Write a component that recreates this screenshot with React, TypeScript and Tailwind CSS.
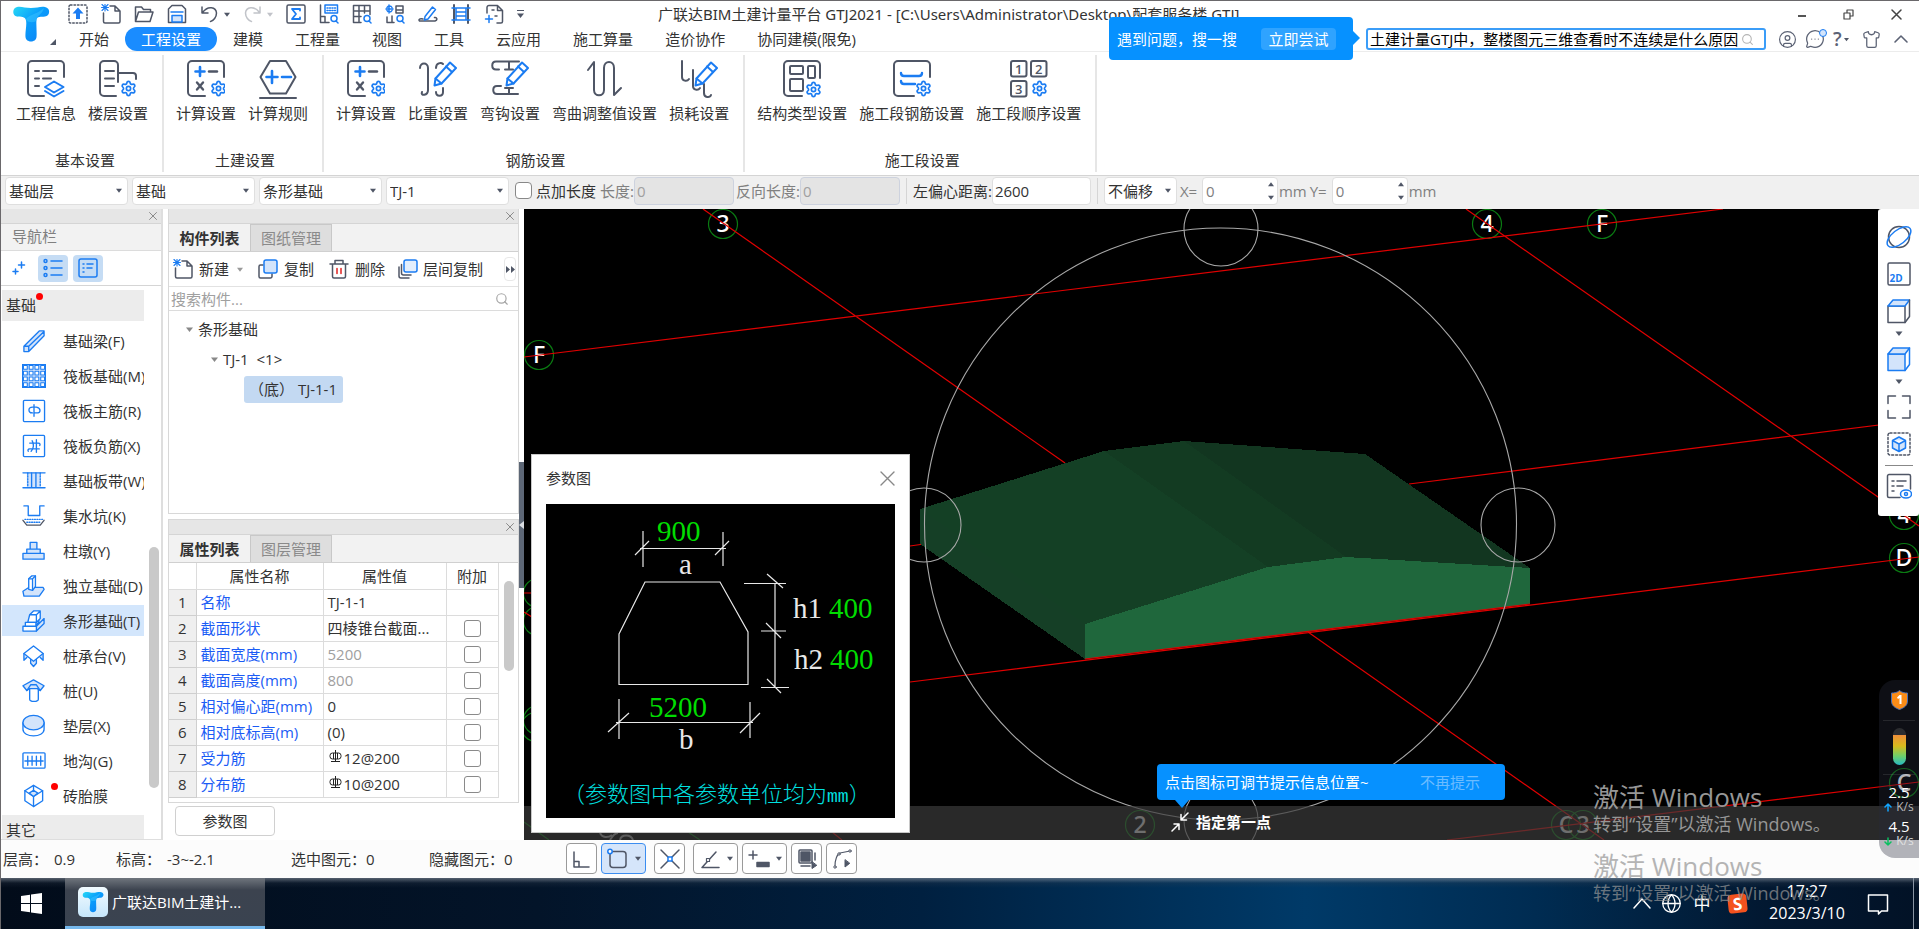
import React from "react";
import { Settings, Search, X, CircleUser, MessageCircleMore, Shirt, ChevronUp, Globe } from "lucide-react";

const D = "#4f5666";
const B = "#1b7cf2";
const L = "#d3e4fb";

type IconProps = { s?: number; vb?: string; h?: number; children: React.ReactNode };

function Svg({ s = 20, h, vb, children }: IconProps) {
  return (
    <svg
      width={s}
      height={h ?? s}
      viewBox={vb ?? `0 0 ${s} ${h ?? s}`}
      fill="none"
      stroke={D}
      strokeWidth={1.5}
      strokeLinecap="round"
      strokeLinejoin="round"
      className="block shrink-0"
      aria-hidden="true"
    >
      {children}
    </svg>
  );
}

function Tri({ c = D, w = 7 }: { c?: string; w?: number }) {
  return (
    <svg width={w} height={5} viewBox="0 0 7 5" className="block shrink-0" aria-hidden="true">
      <path d="M0 0.5h7L3.5 5z" fill={c} />
    </svg>
  );
}

function Gear({ x, y, s = 17 }: { x: number; y: number; s?: number }) {
  return <Settings x={x} y={y} size={s} color={B} strokeWidth={2.4} />;
}

function Pen() {
  return (
    <g stroke={B} strokeWidth="2">
      <path d="M31 2.500 37 8 22.500 23.500 15.500 25.500 16.500 18.500Z" fill="#fff" />
      <path d="M27 6.500 33 12M16.500 18.500 22.500 23.500" />
    </g>
  );
}

function LogoT({ id, s }: { id: string; s: number }) {
  return (
    <svg width={s} height={s} viewBox="0 0 38 38" className="block shrink-0" aria-hidden="true">
      <defs>
        <linearGradient id={id} x1="0" y1="0" x2="1" y2="1">
          <stop offset="0" stopColor="#27d8f5" />
          <stop offset="0.45" stopColor="#0a9dfb" />
          <stop offset="1" stopColor="#0c7df3" />
        </linearGradient>
      </defs>
      <path
        d="M5 2C9 1 13 3 19 3S29 1 33 2C39 3 38 11 33 11.500C29 12 25 11 24.500 15C24 20 25 27 24.500 32C24 38 14 38 13.500 32C13 27 15 20 14 15.500C13 11 9 12 5 11.500C0 11 0 3 5 2Z"
        fill={`url(#${id})`}
      />
      <path d="M14 15C15 10 24 10 32 3C30 10 25 10 24.500 15C24 18 16 18 14 15Z" fill="#3bc6ff" opacity=".5" />
    </svg>
  );
}

/* ---------- quick access bar ---------- */

const newFile = (
  <>
    <path d="M9 2h5l5 5v10.500a1.500 1.500 0 0 1-1.500 1.500H4a1.500 1.500 0 0 1-1.500-1.500V9M14 2v5h5" />
    <path d="M1 0.500l6 6M7 0.500l-6 6M4 0v7M0.500 3.500h7" stroke={B} strokeWidth="1.100" />
  </>
);

const lens = (
  <>
    <circle cx="15" cy="14.500" r="3" stroke={B} />
    <path d="M17 17l2 2" stroke={B} />
  </>
);

const quickA: [string, React.ReactNode][] = [
  ["上传", <><rect x="1" y="1" width="18" height="18" rx="1.5" strokeDasharray="1.500 2" /><path d="M10 3.500 15.500 9.500H12V15H8V9.500H4.500Z" fill={B} stroke="none" /></>],
  ["新建", newFile],
  ["打开", <path d="M1.500 17.500V3h6l2 2.500h7V8M1.500 17.500 4.500 8H19l-3 9.500Z" />],
  ["保存", <><path d="M1.500 18.500V5l3.500-3.500h10L18.500 5v13.500Z" /><path d="M5 18V11.500h10V18Z" fill={L} stroke={B} /><path d="M4 8h12" stroke={B} /></>],
];
const quickB: [string, React.ReactNode][] = [
  ["汇总", <><rect x="1" y="1" width="18" height="18" rx="1.500" /><path d="M14 6.500V5H6l4 5-4 5h8v-1.500" stroke={B} strokeWidth="1.800" /></>],
  ["查看", <><path d="M1.500 1v17.500H10M1.500 12.500h4.500v6" /><rect x="6" y="1" width="12.500" height="8" stroke={B} /><path d="M8 4h9M8 6.500h9" stroke={B} strokeDasharray="1 1.500" />{lens}</>],
  ["查表", <><path d="M1.500 1.500h16.500v9M1.500 1.500v17H9M7 1.500v17M12.500 1.500V9M1.500 7h16.500M1.500 12.500H9" />{lens}</>],
  ["查筋", <><path d="M11 2h7v7h-7zM2 13v5.500h7M7 12v6.500M11 6h7" /><path d="M4 1v8M1 5h7M2 3.500c1-2 4-2 5 0M2 6.500c1 2 4 2 5 0" stroke={B} />{lens}</>],
  ["编辑", <><path d="M5 15c-3-1-5 .5-3.500 2H17c3-1 2-4-.5-3.500" /><path d="M7 12.500 14.500 3l3 2.500L10 15l-3.500 1Z" stroke={B} /></>],
  ["钢筋", <><path d="M3 1v18M17 1v18" strokeWidth="2" /><path d="M1 4h18M5 8h10M5 12h10M1 16h18M5 4v12M15 4v12" stroke={B} /></>],
  ["图幅", <><path d="M3 9V3.500A2 2 0 0 1 5 1.500h8.500l5 5v11a1.500 1.500 0 0 1-1.500 1.500H13M13.500 1.500v5h5M8 6h2M13 12h-2" /><path d="M5 11.500v7M1.500 15H8.500" stroke={B} /></>],
];

/* ---------- ribbon ---------- */

const calcIcon = (
  <>
    <path d="M18 36H5a4 4 0 0 1-4-4V5a4 4 0 0 1 4-4h28a4 4 0 0 1 4 4v12" />
    <path d="M13 7v9M8.500 11.500h9" stroke={B} strokeWidth="2.600" />
    <path d="M22 11.500h8" strokeWidth="2.400" />
    <path d="M10 22.500l6 7M16 22.500l-6 7" strokeWidth="2.400" />
    <Gear x={23} y={20} />
  </>
);

const ribbon: { title: string; items: [string, React.ReactNode][] }[] = [
  {
    title: "基本设置",
    items: [
      ["工程信息", <><path d="M17 36H5a4 4 0 0 1-4-4V5a4 4 0 0 1 4-4h28a4 4 0 0 1 4 4v12" /><path d="M8 11h4M16 11h13M8 18.500h4M16 18.500h8M8 26h4" /><path d="M27 21.500 36.500 27 27 32.500 18 27ZM18 31l9 5.500 9.500-5.500" stroke={B} /></>],
      ["楼层设置", <><path d="M17 36H5a4 4 0 0 1-4-4V5a4 4 0 0 1 4-4h10a4 4 0 0 1 4 4v17M19 13h15a3 3 0 0 1 3 3v3M6 11h9M6 18.500h9M6 26h9" /><Gear x={21} y={20} /></>],
    ],
  },
  {
    title: "土建设置",
    items: [
      ["计算设置", calcIcon],
      ["计算规则", <><path d="M11 1h16l9.500 16L27 33.500H11L1.500 17ZM1 38h36" /><path d="M13 11v12M7.500 17h11M23 17h9" stroke={B} strokeWidth="2.600" /></>],
    ],
  },
  {
    title: "钢筋设置",
    items: [
      ["计算设置", calcIcon],
      ["比重设置", <><path d="M1 8c0-6 8-6 8 0v22c0 6-8 6-6 2M24 4c-2-2-7-1-7 4M24 28v4c0 5-7 5-7 0" /><Pen /></>],
      ["弯钩设置", <><path d="M28 1.500H5c-5 0-5 8 0 8h3M18 1.500v8M14 9.500h8M27 34H6c-5 0-5-8 0-8h4M18 34v-6M14 28h8" /><Pen /></>],
      ["弯曲调整值设置", <path d="M2 10 8 2v28c0 7 10 7 10 0V8c0-8 10-8 10 0v27l7-7" />],
      ["损耗设置", <><path d="M2 1v16c0 4 5 5 7 2M13 10v16c0 4 5 5 7 2M24 24v9c0 5 6 5 7 2" /><Pen /></>],
    ],
  },
  {
    title: "施工段设置",
    items: [
      ["结构类型设置", <><path d="M19 36H5a4 4 0 0 1-4-4V5a4 4 0 0 1 4-4h28a4 4 0 0 1 4 4v13" /><rect x="7" y="6" width="13" height="8" rx="1" /><rect x="7" y="19" width="13" height="12" rx="1" /><rect x="25" y="6" width="7" height="12" rx="1" /><Gear x={22} y={21} /></>],
      ["施工段钢筋设置", <><path d="M21 36H5a4 4 0 0 1-4-4V5a4 4 0 0 1 4-4h28a4 4 0 0 1 4 4v12" /><path d="M8 13c0 2 1 3 3 3h15c2 0 3-1 3-3M8 21c0 2 1 3 3 3h11" stroke={B} strokeWidth="2.400" /><Gear x={22} y={20} /></>],
      ["施工段顺序设置", <><rect x="1" y="1" width="15.500" height="15.500" rx="2" /><rect x="21" y="1" width="15.500" height="15.500" rx="2" /><rect x="1" y="21" width="15.500" height="15.500" rx="2" /><g fill={D} stroke="none" fontSize="13" fontWeight="600" textAnchor="middle" fontFamily="Open Sans, sans-serif"><text x="8.800" y="13.500">1</text><text x="28.800" y="13.500">2</text><text x="8.800" y="33.500">3</text></g><Gear x={21} y={20} /></>],
    ],
  },
];

/* ---------- navigation ---------- */

const raftHoles = [0, 6, 12, 18].flatMap((y) => [0, 6, 12, 18].map((x) => [x, y]));

const navItems: { label: string; icon: React.ReactNode; dot?: boolean; active?: boolean }[] = [
  { label: "基础梁(F)", icon: <path d="M2 18 18 2h5v5L7 23.500H2ZM2 18h5v5.500M7 18 23 2.500" fill={L} /> },
  { label: "筏板基础(M)", icon: <><path d="M0.500 0.500h24v24h-24Z" fill={L} />{raftHoles.map(([x, y]) => <rect key={`${x}-${y}`} x={x + 1.5} y={y + 1.5} width="4" height="4" fill="#fff" strokeWidth="1.100" />)}</> },
  { label: "筏板主筋(R)", icon: <><rect x="1.500" y="1.500" width="22" height="22" rx="1" /><path d="M12.500 6v12M15 8.500H11c-5 0-5 6 0 6h-2M15 8.500c5 1 5 6 0 6h-2" /></> },
  { label: "筏板负筋(X)", icon: <><rect x="1.500" y="1.500" width="22" height="22" rx="1" /><path d="M8 9.500h9c2 0 2 1.500 1.500 2.500M18 15.500H8c-2 0-2 1.500-1.500 2.500M10.500 7c2 3 2 8-1 11M15 6v13" /></> },
  { label: "基础板带(W)", icon: <><path d="M5 4h14v15H5Z" fill={L} stroke="none" /><path d="M1 4h23M1 19.500h23" /><path d="M6 4v15M19 4v15" strokeDasharray="1.500 1.500" /><path d="M10 4v15M14.500 4v15" /></> },
  { label: "集水坑(K)", icon: <><path d="M2 2h4.500v10h12V2H23" /><path d="M1 17l4 5h14l4-5" stroke={D} /><path d="M3 16h19M5 19h14" strokeDasharray="1 1.500" /></> },
  { label: "柱墩(Y)", icon: <path d="M1 15h22v6H1ZM5 15v-4.500h14V15M8.500 10.500V3.500h7v7" fill={L} /> },
  { label: "独立基础(D)", icon: <><path d="M1 18 7 14h15l1 2-5 7H2Z" fill={L} /><path d="M7 16V5l3-3h4v11l-3 4Z" fill="#fff" /><path d="M7 5h4l3-3M11 5v12" /></> },
  { label: "条形基础(T)", icon: <><path d="M15 18l8-8v5l-8 8ZM12.500 14l5-5v5l-5 4Z" fill={L} /><path d="M6 14 8 6l4-4h7v8l-4 4ZM15 14V6l4-4M8 6h7" fill="#fff" /><path d="M1 18h14v5H1ZM3.500 14h11v4h-11Z" fill="#fff" /></>, active: true },
  { label: "桩承台(V)", icon: <><path d="M2 10v7l3-3M22 10v7l-3-3M9 16v4l3 3.500 3-3.500v-4" fill={L} /><path d="M2 10 12 2l10 8-10 8Z" fill="#fff" /></> },
  { label: "桩(U)", icon: <><path d="M8 10v11c0 3 9 3 9 0V10" /><path d="M1 7 12 1l11 6-4 5-3-2H8l-3 2Z" fill={L} /><path d="M5 12 9 6h6l4 6" /></> },
  { label: "垫层(X)", icon: <><path d="M1 9v7c0 9 22 9 22 0V9" /><ellipse cx="12" cy="9" rx="11" ry="7.500" fill={L} /></> },
  { label: "地沟(G)", icon: <><rect x="1" y="4" width="23" height="16" rx="1" /><path d="M3 12.500h19M6 7.500v9.500M10.500 7.500v9.500M15 7.500v9.500M19.500 7.500v9.500" /></> },
  { label: "砖胎膜", icon: <><path d="M3 7 12 1.500 21.500 7v10.500L12 23.500 3 17.500Z" fill="#fff" /><path d="M3 7l9 6 9.500-6M12 13v10.500M12 1.500v5" /><path d="M7.500 9.500l4.500-3 4.500 3-4.500 3.500Z" fill={L} /></>, dot: true },
];

/* ---------- properties ---------- */

type Row = { name: string; value: string; muted?: boolean; check?: boolean; rebar?: boolean };
const rows: Row[] = [
  { name: "名称", value: "TJ-1-1" },
  { name: "截面形状", value: "四棱锥台截面...", check: true },
  { name: "截面宽度(mm)", value: "5200", muted: true, check: true },
  { name: "截面高度(mm)", value: "800", muted: true, check: true },
  { name: "相对偏心距(mm)", value: "0", check: true },
  { name: "相对底标高(m)", value: "(0)", check: true },
  { name: "受力筋", value: "12@200", check: true, rebar: true },
  { name: "分布筋", value: "10@200", check: true, rebar: true },
];

function Rebar() {
  return (
    <svg width="13" height="13" viewBox="0 0 13 13" fill="none" stroke="#222" strokeWidth="1" className="mb-1 ml-px block shrink-0" aria-hidden="true">
      <path d="M6.500 0v12M2 11.500h9M4.500 3v6M8.500 3v6" />
      <rect x="1" y="3" width="11" height="6" rx="2.500" />
    </svg>
  );
}

/* ---------- shared pieces ---------- */

function Combo({ label, value, className }: { label: string; value: string; className: string }) {
  return (
    <div className={`relative ${className}`}>
      <select
        aria-label={label}
        className="h-7 w-full appearance-none rounded border border-[#dfdfdf] bg-white pl-[3px] pr-4 text-[15px] leading-6 text-[#333] outline-none"
      >
        <option>{value}</option>
      </select>
      <span className="pointer-events-none absolute right-[6px] top-[11px]">
        <Tri w={6} />
      </span>
    </div>
  );
}

function Spin({ label, unit }: { label: string; unit: string }) {
  return (
    <label className="ml-[3px] flex items-center text-[#808080]">
      <span className="w-[22px]">{label}</span>
      <span className="relative w-[76px]">
        <input defaultValue="0" className="h-7 w-full rounded border border-[#dfdfdf] bg-white pl-[3px] text-[15px] text-[#808080] outline-none" />
        <span className="pointer-events-none absolute right-1 top-[5px] flex flex-col gap-2">
          <span className="rotate-180"><Tri w={6} /></span>
          <Tri w={6} />
        </span>
      </span>
      <span className="ml-px">{unit}</span>
    </label>
  );
}

function PanelStrip() {
  return (
    <div className="flex h-[15px] shrink-0 items-center justify-end border-b border-[#d5d5d5] bg-[#e6e6e6] pr-px">
      <button aria-label="关闭面板"><X size={14} color="#8a8a8a" strokeWidth={1.7} className="block" /></button>
    </div>
  );
}

function Tabs({ a, b }: { a: string; b: string }) {
  return (
    <div className="flex h-[28px] shrink-0 border-b border-[#d0d0d0] bg-[#f2f2f2] text-center" role="tablist">
      <button role="tab" className="w-[81px] bg-[#f2f2f2] font-bold text-[#333]">{a}</button>
      <button role="tab" className="w-[82px] border border-b-0 border-[#c8c8c8] bg-[#dedede] text-[#8a8a8a]">{b}</button>
    </div>
  );
}

/* ---------- 3D scene ---------- */

const axes: [string, number, number, boolean][] = [
  ["3", 723, 224, false],
  ["F", 539, 355, false],
  ["4", 1487, 224, false],
  ["F", 1602, 224, false],
  ["4", 1904, 515, false],
  ["D", 1904, 558, false],
  ["C", 1904, 783, false],
  ["2", 1140, 825, true],
  ["C", 1566, 825, true],
  ["3", 1583, 825, true],
];

function Scene() {
  return (
    <svg viewBox="524 209 1395 631" preserveAspectRatio="xMinYMin slice" className="block h-full w-full" role="img" aria-label="三维模型">
      <g fill="none" stroke="#0a7a12" strokeWidth="1.200">
        {axes.map(([t, x, y]) => (
          <circle key={`${t}${x}`} cx={x} cy={y} r="14.500" />
        ))}
        <circle cx="538" cy="593" r="14.500" /><circle cx="538" cy="621" r="14.500" /><circle cx="536" cy="727" r="14.500" /><circle cx="538" cy="720" r="14.500" />
        <path d="M524 822l25 18M688 832l12 8" />
      </g>
      <g fontFamily="Noto Sans, sans-serif" fontSize="23" fontWeight="500" textAnchor="middle">
        {axes.map(([t, x, y, dim]) => (
          <text key={`${t}${x}`} x={x} y={y + 8} fill={dim ? "#e8e8e8" : "#fff"}>{t}</text>
        ))}
      </g>
      <g stroke="#e00000" strokeWidth="1.200">
        <path d="M703 209 1065 463M524 357 1723 209M1466 209 1878 497 1919 526M1409 484 1919 420M910 546 924 544M910 682 1919 557M1308 632 1604 840M1447 840 1919 782M524 593h8M524 612l8 5M832 832l10 8" fill="none" />
      </g>
      <g shapeRendering="crispEdges">
        <path d="M920 509 1085 624V659L920 544Z" fill="#153f26" />
        <path d="M920 509 1104 451 1268 567 1085 624Z" fill="#144025" />
        <path d="M1104 451 1184 441 1346 557 1268 567Z" fill="#133b22" />
        <path d="M1184 441 1365 454 1530 568 1346 557Z" fill="#123620" />
        <path d="M1085 624 1268 567 1346 557 1530 568V604L1085 659Z" fill="#1f673c" />
      </g>
      <path d="M1085 659 1530 604" stroke="#e00000" strokeWidth="1.200" />
      <g fill="none" stroke="#a8a8a8" strokeWidth="1.100">
        <circle cx="1220.500" cy="524" r="296" />
        <circle cx="1221" cy="229" r="37" />
        <circle cx="924" cy="525" r="37" />
        <circle cx="1518" cy="525" r="37" />
        <circle cx="1221" cy="820" r="37" />
        <path d="M600 833c2 5 8 5 12 2M610 840c3-5 6-7 8-7M620 840c1-6 11-6 13 0" strokeWidth="2" />
      </g>
      <rect x="524" y="806" width="1395" height="40" fill="#3b3b3b" opacity=".7" />
    </svg>
  );
}

function ParamDrawing() {
  return (
    <svg viewBox="546 504 349 314" className="block w-full bg-black" role="img" aria-label="四棱锥台截面参数图">
      <g fill="none" stroke="#e8e8e8" strokeWidth="1.200">
        <path d="M619 634 645 582H720L748 632V684.500H619Z" />
        <path d="M643 531v36M723 532v34M640 548.500h86M635 555l14-14M715 555l14-14" />
        <path d="M619 699v40M750 702v36M616 722.500h137M608 732l21-19M740 733l20-20" />
        <path d="M744 583.500h42M775 583v104M761 631h25M761 687.500h28M767 574l16 14M766 623l15 15M767 679l14 14" />
      </g>
      <g fontFamily="Liberation Serif, serif" fontSize="29" fill="#00dd00">
        <text x="657" y="541">900</text>
        <text x="649" y="717">5200</text>
        <text x="829" y="618">400</text>
        <text x="830" y="669">400</text>
        <g fill="#e8e8e8">
          <text x="679" y="574">a</text>
          <text x="679" y="749">b</text>
          <text x="793" y="618">h1</text>
          <text x="794" y="669">h2</text>
        </g>
      </g>
      <text x="563" y="802" fontSize="22" fontWeight="300" fill="#00e0e0" fontFamily="Noto Sans CJK SC, sans-serif">
        （参数图中各参数单位均为<tspan fontFamily="Liberation Mono, monospace" fontSize="18">mm</tspan>）
      </text>
    </svg>
  );
}

const cube = (fill: string, stroke: string, top: string) => (
  <g stroke={stroke}>
    <path d="M1.500 7.500h17V24h-17Z" fill={fill} />
    <path d="M1.500 7.500 6.500 1.500H23l-4.500 6Z" fill={top} stroke={B} />
    <path d="M18.500 24 23 18V1.500" />
  </g>
);

const viewTools: [string, React.ReactNode][] = [
  ["动态观察", <><circle cx="12.500" cy="12.500" r="10.500" /><ellipse cx="12.500" cy="12.500" rx="14" ry="7" transform="rotate(-38 12.500 12.500)" stroke={B} /></>],
  ["二维", <><rect x="1.500" y="1.500" width="22" height="22" rx="1.500" /><text x="3" y="20.500" fontSize="10" fontWeight="700" fill={B} stroke="none" fontFamily="Open Sans, sans-serif">2D</text></>],
  ["俯视", cube("#fff", D, L)],
  ["实体", cube(L, B, L)],
  ["全屏", <path d="M1.500 9V1.500H9M16 1.500h7.500V9M23.500 16v7.500H16M9 23.500H1.500V16" />],
  ["局部三维", <><rect x="1.500" y="1.500" width="22" height="22" rx="2" strokeDasharray="2 2" /><path d="M12.500 5.500 19 9v7.500l-6.500 3.500L6 16.500V9ZM6 9l6.500 3.500L19 9M12.500 12.500V20" stroke={B} fill={L} /></>],
];

const snapTools: { label: string; icon: React.ReactNode; wide?: boolean; active?: boolean; gap: string }[] = [
  { label: "正交", gap: "ml-0", icon: <path d="M3 4v15h15M3 13.500h5V19" /> },
  { label: "对象捕捉", gap: "ml-1", wide: true, active: true, icon: <><rect x="3" y="3.500" width="16" height="16" rx="3" /><circle cx="3" cy="3.500" r="2.200" stroke={B} fill="#fff" /></> },
  { label: "交点", gap: "ml-2", icon: <><path d="M2 2l18 18M20 2 2 20" /><rect x="9" y="9" width="4" height="4" stroke={B} fill="#fff" /></> },
  { label: "角度", gap: "ml-2", wide: true, icon: <><path d="M17 4 3 19.500h17" /><rect x="7.500" y="10.500" width="3" height="3" fill="#fff" strokeWidth="1.200" /></> },
  { label: "动态输入", gap: "ml-1", wide: true, icon: <><path d="M1 7h8M5 3v8" /><rect x="9" y="14.500" width="12" height="4" fill={D} /></> },
  { label: "选择", gap: "ml-1", icon: <><rect x="3" y="2" width="13" height="13" rx="1" /><rect x="5" y="4" width="9" height="9" fill={D} /><path d="M19 5v7M5 18h9" /><path d="M16 14v6.500l4.500-3Z" fill={D} strokeWidth="1" /></> },
  { label: "折线", gap: "ml-1", icon: <><path d="M4 18c0-6 2-12 5-13l10-2" strokeWidth="1.200" /><path d="M14 12v7l4.500-3.500Z" fill={D} strokeWidth="1" /><g fill="#fff" strokeWidth="1"><circle cx="4" cy="19" r="1.200" /><circle cx="8" cy="6" r="1.200" /><circle cx="19" cy="3" r="1.200" /></g></> },
];

function Watermark() {
  return (
    <div className="w-[236px] whitespace-nowrap text-[#969696]">
      <p className="text-[26px] leading-[30px]">激活 Windows</p>
      <p className="text-[18px] leading-[24px]">转到“设置”以激活 Windows。</p>
    </div>
  );
}

export default function App() {
  return (
    <div
      className="relative flex h-screen flex-col overflow-hidden border-l border-t border-[#6a686b] bg-white text-[15px] leading-5 text-[#333]"
      style={{ fontFamily: '"Open Sans", "Noto Sans CJK SC", sans-serif' }}
    >
      {/* title bar and tabs */}
      <header className="flex h-[51px] shrink-0 border-b border-[#ececec]">
        <div className="flex w-[62px] items-start pl-[11px] pt-[4px]">
          <LogoT id="lg1" s={38} />
          <svg width="6" height="6" viewBox="0 0 6 6" className="mt-[34px] shrink-0" aria-hidden="true"><path d="M6 0v6H0z" fill={D} /></svg>
        </div>
        <div className="flex min-w-0 flex-1 flex-col">
          <div className="flex h-[26px] items-center">
            <div className="flex items-center gap-[13px] pl-[5px]">
              {quickA.map(([l, i]) => <button key={l} aria-label={l}><Svg>{i}</Svg></button>)}
              <button aria-label="撤销" className="flex items-center gap-1"><Svg><path d="M2 3v6h6M2.500 8.500C8 1 16 3 16.500 9c0 4-3 8-6 8.500" /></Svg><Tri w={6} /></button>
              <button aria-label="恢复" className="flex items-center gap-1 opacity-35"><Svg><path d="M17 3v6h-6M16.500 8.500C11 1 3 3 2.500 9c0 4 3 8 6 8.500" /></Svg><Tri w={6} /></button>
              {quickB.map(([l, i]) => <button key={l} aria-label={l}><Svg>{i}</Svg></button>)}
              <button aria-label="更多" className="flex flex-col gap-[2px]"><span className="h-px w-[7px] bg-[#4f5666]" /><Tri /></button>
            </div>
            <h1 className="ml-[134px] whitespace-nowrap" style={{ fontFamily: '"Noto Sans", "Noto Sans CJK SC", sans-serif' }}>
              广联达BIM土建计量平台 GTJ2021 - [C:\Users\Administrator\Desktop\配套服务楼.GTJ]
            </h1>
            <div className="ml-auto flex items-center gap-[37px] pr-[17px]">
              <button aria-label="最小化" className="mt-1 h-[2px] w-[8px] bg-[#555]" />
              <button aria-label="还原"><Svg s={11}><path d="M1 4h6v6H1ZM4 4V1h6v6H7" strokeWidth="1.200" stroke="#444" /></Svg></button>
              <button aria-label="关闭"><Svg s={11}><path d="M1 1l9 9M10 1l-9 9" strokeWidth="1.500" stroke="#444" /></Svg></button>
            </div>
          </div>
          <nav className="flex h-6 items-center">
            {["开始", "工程设置", "建模", "工程量", "视图", "工具", "云应用", "施工算量", "造价协作", "协同建模(限免)"].map((t) => (
              <button
                key={t}
                className={t === "工程设置" ? "h-6 rounded-full bg-[#1a8cff] px-4 text-white" : "h-6 px-4"}
              >
                {t}
              </button>
            ))}
            <div className="relative ml-auto">
              <div className="absolute -top-[11px] right-full z-10 mr-[13px] flex h-[43px] w-[244px] items-center rounded bg-[#0691ff] pl-2 text-white">
                <span className="whitespace-nowrap">遇到问题，搜一搜</span>
                <button className="ml-auto mr-[17px] h-[22px] w-[75px] rounded-sm bg-[#2fa3ff]">立即尝试</button>
                <svg width="7" height="14" viewBox="0 0 7 14" className="absolute left-full top-[14px]" aria-hidden="true"><path d="M0 0 7 7 0 14Z" fill="#0691ff" /></svg>
              </div>
              <div className="flex h-[22px] w-[400px] items-center rounded-[3px] border-2 border-[#3b9df8] bg-white px-[2px]">
                <input aria-label="搜索" defaultValue="土建计量GTJ中，整楼图元三维查看时不连续是什么原因" className="min-w-0 flex-1 bg-transparent text-[15px] leading-[18px] text-black outline-none" />
                <Search size={13} color="#b5b5b5" className="ml-[2px] mr-2 shrink-0" />
              </div>
            </div>
            <div className="ml-3 flex items-center gap-2 pr-[6px] text-[#5c6375]">
              <button aria-label="用户"><CircleUser size={19} strokeWidth={1.500} /></button>
              <button aria-label="消息" className="relative">
                <MessageCircleMore size={20} strokeWidth={1.500} />
                <span className="absolute -right-[2px] top-0 size-[8px] rounded-full border border-[#1b7cf2] bg-[#d3e4fb]" />
              </button>
              <button aria-label="帮助" className="flex w-[21px] items-center text-[19px] font-semibold"><span>?</span><span className="ml-[2px]"><Tri w={5} /></span></button>
              <button aria-label="皮肤"><Shirt size={19} strokeWidth={1.600} /></button>
              <button aria-label="收起"><ChevronUp size={24} strokeWidth={1.600} /></button>
            </div>
          </nav>
        </div>
      </header>

      {/* ribbon */}
      <section className="flex h-[124px] shrink-0 border-b border-[#d4d4d4] pl-[3px]">
        {ribbon.map((g) => (
          <div key={g.title} className="my-[3px] flex flex-col items-center border-r-2 border-[#e6e6e6] pb-[2px] pl-[6px] pr-2 pt-[5px]">
            <div className="flex">
              {g.items.map(([l, i]) => (
                <button key={l} className="flex flex-col items-center gap-1 whitespace-nowrap px-[6px]">
                  <Svg s={38} h={39}><g strokeWidth="2">{i}</g></Svg>
                  {l}
                </button>
              ))}
            </div>
            <h2 className="mt-auto pl-[6px]">{g.title}</h2>
          </div>
        ))}
      </section>

      {/* option bar */}
      <section className="flex h-[33px] shrink-0 items-center whitespace-nowrap bg-[#f0f0f0] pb-[5px] pl-1 pt-px">
        <div className="flex gap-1">
          <Combo label="楼层" value="基础层" className="w-[123px]" />
          <Combo label="类别" value="基础" className="w-[123px]" />
          <Combo label="构件类型" value="条形基础" className="w-[123px]" />
          <Combo label="构件" value="TJ-1" className="w-[123px]" />
        </div>
        <label className="ml-[6px] flex items-center gap-1">
          <input type="checkbox" className="size-[17px] appearance-none rounded-sm border border-[#888] bg-white" />
          点加长度
        </label>
        <label className="ml-1 flex items-center text-[#808080]">长度:
          <input disabled defaultValue="0" className="h-7 w-[100px] rounded border border-[#cdd2de] bg-[#e4e4e4] pl-[2px] text-[15px] text-[#a0a0a0]" />
        </label>
        <label className="ml-[2px] flex items-center text-[#808080]">反向长度:
          <input disabled defaultValue="0" className="h-7 w-[100px] rounded border border-[#cdd2de] bg-[#e4e4e4] pl-[2px] text-[15px] text-[#a0a0a0]" />
        </label>
        <span className="mx-[6px] h-[26px] w-px bg-[#d5d5d5]" />
        <label className="flex items-center">左偏心距离:
          <input defaultValue="2600" className="h-7 w-[99px] rounded border border-[#dfdfdf] bg-white pl-[2px] text-[15px]" />
        </label>
        <span className="mx-[6px] h-[26px] w-px bg-[#d5d5d5]" />
        <Combo label="偏移" value="不偏移" className="w-[73px]" />
        <Spin label="X=" unit="mm" />
        <Spin label="Y=" unit="mm" />
      </section>

      {/* work area */}
      <main className="flex min-h-0 flex-1">
        <aside className="flex w-[162px] shrink-0 flex-col border-b border-r-2 border-[#dedede]">
          <PanelStrip />
          <h2 className="h-[27px] shrink-0 border-b border-[#dcdcdc] bg-[#f2f2f2] pl-[11px] leading-[25px] text-[#808080]">导航栏</h2>
          <div className="flex h-[35px] shrink-0 items-center gap-[5px] border-b border-[#d5d5d5] pl-1">
            <button aria-label="添加" className="flex h-[27px] w-[28px] items-center justify-center"><Svg s={14}><g stroke={B}><path d="M9.500 1v6M6.500 4h6M3.500 8v5M1 10.500h5" /></g></Svg></button>
            <button aria-label="列表" className="flex h-[27px] w-[30px] items-center justify-center rounded bg-[#c5dcf4]"><Svg s={20}><g stroke={B}><path d="M8 3h11M8 10h11M8 17h11" /><circle cx="2.500" cy="3" r="1.500" /><circle cx="2.500" cy="10" r="1.500" /><circle cx="2.500" cy="17" r="1.500" /></g></Svg></button>
            <button aria-label="详情" className="flex h-[27px] w-[30px] items-center justify-center rounded bg-[#c5dcf4]"><Svg s={20}><g stroke={B}><rect x="1" y="1" width="18" height="18" rx="2" /><path d="M5 6h1M9 6h6M5 10h1M9 10h5M5 14h1" /></g></Svg></button>
          </div>
          <div className="flex min-h-0 flex-1 overflow-hidden">
            <div className="w-[143px] shrink-0 overflow-hidden pl-px pt-1">
              <h3 className="relative h-[31px] bg-[#ececec] pl-1 leading-[31px]">
                基础
                <span className="absolute left-[34px] top-[3px] size-[7px] rounded-full bg-[#f00]" />
              </h3>
              <ul className="pt-[2px]">
                {navItems.map((n) => (
                  <li key={n.label} className="h-[35px] py-[2px]">
                    <button className={n.active ? "relative flex h-[31px] w-full items-center gap-[17px] whitespace-nowrap bg-[#d3e6fc] pl-[20px]" : "relative flex h-[31px] w-full items-center gap-[17px] whitespace-nowrap pl-[20px]"}>
                      <Svg s={24} vb="0 0 25 25"><g stroke={B} strokeWidth="1.400">{n.icon}</g></Svg>
                      {n.label}
                      {n.dot && <span className="absolute left-[49px] top-[3px] size-[7px] rounded-full bg-[#f00]" />}
                    </button>
                  </li>
                ))}
              </ul>
              <h3 className="mt-[2px] h-[31px] bg-[#ececec] pl-1 leading-[31px]">其它</h3>
            </div>
            <div className="ml-[5px] mt-[261px] h-[241px] w-[10px] rounded-full bg-[#c9c9c9]" />
          </div>
        </aside>

        <div className="ml-[5px] flex w-[351px] shrink-0 flex-col">
          <section className="flex h-[305px] shrink-0 flex-col border border-t-0 border-[#d8d8d8]">
            <PanelStrip />
            <Tabs a="构件列表" b="图纸管理" />
            <div className="flex h-[35px] shrink-0 items-center border-b border-[#e2e2e2] pl-1">
              <button className="flex items-center gap-[6px]"><Svg>{newFile}</Svg>新建</button>
              <span className="ml-2"><Tri w={6} c="#999" /></span>
              <button className="ml-[15px] flex items-center gap-[6px]"><Svg><path d="M5 6H2.500A1.500 1.500 0 0 0 1 7.500v10A1.500 1.500 0 0 0 2.500 19h10a1.500 1.500 0 0 0 1.500-1.500V15" /><rect x="6" y="1" width="13" height="13" rx="2" fill={L} stroke={B} /></Svg>复制</button>
              <button className="ml-[15px] flex items-center gap-[6px]"><Svg><path d="M1 5h18M6 5V1.500h8V5M3.500 5v12.500A1.500 1.500 0 0 0 5 19h10a1.500 1.500 0 0 0 1.500-1.500V5" /><path d="M8 9.500v5M12 9.500v5" stroke="#e02020" /></Svg>删除</button>
              <button className="ml-[13px] flex items-center gap-[5px]"><Svg><path d="M3.500 5.500v8.500a2 2 0 0 0 2 2H13M1 8v9a2 2 0 0 0 2 2h8" /><rect x="6" y="1" width="13" height="12" rx="2" fill="#e2eefd" stroke={B} /></Svg>层间复制</button>
              <button aria-label="更多" className="ml-auto mr-[2px] flex h-6 w-3 items-center justify-center rounded border border-[#e8e8e8]"><svg width="9" height="7" viewBox="0 0 9 7" className="shrink-0" aria-hidden="true"><path d="M0 0l4 3.500L0 7zM5 0l4 3.500L5 7z" fill={D} /></svg></button>
            </div>
            <div className="flex h-6 shrink-0 items-center border-b border-[#dcdcdc] pl-[2px] pr-[9px]">
              <input aria-label="搜索构件" placeholder="搜索构件..." className="min-w-0 flex-1 text-[15px] outline-none placeholder:text-[#a0a0a0]" />
              <Search size={14} color="#a5a5a5" />
            </div>
            <ul className="pt-[3px]">
              <li className="flex h-[30px] items-center gap-[5px] pl-[17px]"><Tri c="#888" />条形基础</li>
              <li className="flex h-[30px] items-center gap-[5px] whitespace-pre pl-[42px]"><Tri c="#888" />TJ-1  &lt;1&gt;</li>
              <li className="flex h-[30px] items-center pl-[75px]"><button className="h-[27px] whitespace-pre rounded-[3px] bg-[#c3d9f2] pl-[5px] pr-[6px]">（底） TJ-1-1</button></li>
            </ul>
          </section>

          <section className="mt-[5px] flex min-h-0 flex-1 flex-col">
            <div className="flex h-[284px] shrink-0 flex-col overflow-hidden border border-[#d8d8d8]">
              <PanelStrip />
              <Tabs a="属性列表" b="图层管理" />
              <div className="flex">
                <table className="w-[329px] table-fixed border-collapse">
                  <thead>
                    <tr className="h-[26px]">
                      <th aria-label="序号" className="w-[27px] border-b border-r border-[#dcdcdc]" />
                      <th className="w-[127px] border-b border-r border-[#dcdcdc] font-normal">属性名称</th>
                      <th className="w-[123px] border-b border-r border-[#dcdcdc] font-normal">属性值</th>
                      <th className="w-[52px] border-b border-r border-[#dcdcdc] font-normal">附加</th>
                    </tr>
                  </thead>
                  <tbody>
                    {rows.map((r, i) => (
                      <tr key={r.name} className="h-[26px]">
                        <td className="border-b border-r border-[#cfcfcf] bg-[#efefef] text-center">{i + 1}</td>
                        <td className="whitespace-nowrap border-b border-r border-[#dcdcdc] pl-1 text-[#1b5cf5]">{r.name}</td>
                        <td className={r.muted ? "whitespace-nowrap border-b border-r border-[#dcdcdc] pl-1 text-[#a0a0a0]" : "whitespace-nowrap border-b border-r border-[#dcdcdc] pl-1"}>
                          <span className="flex items-center gap-[2px]">{r.rebar && <Rebar />}{r.value}</span>
                        </td>
                        <td className="border-b border-r border-[#dcdcdc]">
                          {r.check && <input type="checkbox" aria-label={`附加 ${r.name}`} className="mx-auto block size-[17px] appearance-none rounded-[3px] border border-[#8a8a8a] bg-white" />}
                        </td>
                      </tr>
                    ))}
                  </tbody>
                </table>
                <div className="ml-[5px] mt-[18px] h-[90px] w-[10px] rounded-full bg-[#c9c9c9]" />
              </div>
            </div>
            <button className="ml-[7px] mt-[3px] h-[30px] w-[100px] rounded border border-[#d0d0d0] bg-white">参数图</button>
          </section>
        </div>

        <div className="flex w-[5px] shrink-0 flex-col bg-white pt-[253px]">
          <button aria-label="收起侧栏" className="flex h-[126px] items-center bg-[#5d6776]">
            <svg width="5" height="8" viewBox="0 0 5 8" aria-hidden="true"><path d="M5 0v8L0 4z" fill="#d8dbe0" /></svg>
          </button>
        </div>

        <section className="relative min-w-0 flex-1 overflow-hidden bg-black">
          <Scene />

          <div role="dialog" aria-label="参数图" className="absolute bottom-[7px] left-[7px] w-[379px] border border-[#c8c8c8] bg-white px-[14px] pb-[14px] text-[#333]">
            <div className="flex h-[49px] items-center justify-between pb-[3px]">
              <h2>参数图</h2>
              <button aria-label="关闭"><Svg s={16}><path d="M2 2l13 13M15 2 2 15" stroke="#888" strokeWidth="1.400" /></Svg></button>
            </div>
            <ParamDrawing />
          </div>

          <div className="absolute right-0 top-0 flex w-[41px] flex-col items-center rounded-b-[3px] rounded-tl-[3px] bg-white pb-[17px] pt-[15px]">
            {viewTools.map(([l, i], k) => (
              <button key={l} aria-label={l} className={k === 2 || k === 3 ? "mb-[10px] flex flex-col items-center gap-[7px]" : "mb-[11px] flex flex-col items-center"}>
                <Svg s={26} vb="-0.500 -0.500 26 26">{i}</Svg>
                {(k === 2 || k === 3) && <Tri w={8} />}
              </button>
            ))}
            <span className="-mt-[3px] mb-[7px] h-px w-7 bg-[#888]" />
            <button aria-label="显示设置">
              <Svg s={26}><path d="M14 24.500H3A1.500 1.500 0 0 1 1.500 23V3A1.500 1.500 0 0 1 3 1.500h20A1.500 1.500 0 0 1 24.500 3v13M6 8h2M11 8h9M6 13h2M11 13h6M6 18h2" /><ellipse cx="20" cy="21" rx="5.500" ry="4" stroke={B} fill="#fff" /><circle cx="20" cy="21" r="1.500" stroke={B} /></Svg>
            </button>
          </div>

          <div className="absolute bottom-2 left-[647px] flex items-center gap-[7px] font-bold text-white">
            <Svg s={18} h={20}><g stroke="#fff"><path d="M17 1l-7 7M10 2.500V8h5.500M1 19l7-7M3 12h5v5.500" /></g></Svg>
            指定第一点
          </div>
          <div className="absolute bottom-[40px] left-[633px] flex h-[36px] w-[348px] items-center justify-between whitespace-nowrap rounded bg-[#0691ff] pl-2 pr-[25px] text-white">
            <span>点击图标可调节提示信息位置~</span>
            <button className="text-[#6bbcff]">不再提示</button>
            <svg width="14" height="8" viewBox="0 0 14 8" className="absolute left-[18px] top-full" aria-hidden="true"><path d="M0 0H14L7 8Z" fill="#0691ff" /></svg>
          </div>
        </section>
      </main>

      {/* status bar */}
      <footer className="flex h-[38px] shrink-0 items-center whitespace-nowrap bg-[#fcfcfc] pb-px pl-[2px]">
        <dl className="flex w-[563px] shrink-0">
          <div className="flex w-[113px]"><dt className="w-[51px]">层高：</dt><dd>0.9</dd></div>
          <div className="flex w-[175px]"><dt className="w-[51px]">标高：</dt><dd>-3~-2.1</dd></div>
          <div className="flex w-[138px]"><dt>选中图元：</dt><dd>0</dd></div>
          <div className="flex"><dt>隐藏图元：</dt><dd>0</dd></div>
        </dl>
        {snapTools.map((t) => (
          <button
            key={t.label}
            aria-label={t.label}
            className={`flex h-[31px] items-center justify-center gap-[6px] rounded border ${t.wide ? "w-[45px]" : "w-[31px]"} ${t.gap} ${t.active ? "border-[#3b8df0] bg-[#d5e5fa]" : "border-[#9a9a9a] bg-white"}`}
          >
            <Svg s={22}>{t.icon}</Svg>
            {t.wide && <Tri w={6} />}
          </button>
        ))}
      </footer>

      {/* taskbar */}
      <div className="flex h-[51px] shrink-0 bg-[linear-gradient(to_bottom,#8d96a299_0px,#3d4a5a33_5px,transparent_10px),linear-gradient(to_right,#020c1a_0%,#031429_28%,#002040_48%,#003a68_68%,#002c52_80%,#021831_92%,#021226_100%)] text-white">
        <button aria-label="开始" className="flex w-16 shrink-0 items-center justify-center pr-1">
          <svg width="21" height="21" viewBox="0 0 21 21" aria-hidden="true"><path d="M0 3 9 1.700V10H0ZM10 1.500 21 0V10H10ZM0 11H9V19.300L0 18ZM10 11H21V21L10 19.500Z" fill="#fff" /></svg>
        </button>
        <button className="flex w-[200px] shrink-0 items-center gap-1 whitespace-nowrap border-b-[3px] border-[#76b9ed] bg-[linear-gradient(to_bottom,#6f757d,#3c434f_12px,#3a4350)] pl-[13px] text-[15px]">
          <span className="flex size-[30px] items-center justify-center rounded-[5px] bg-[linear-gradient(to_bottom,#f2fbff,#c6e6fb)]"><LogoT id="lg2" s={22} /></span>
          广联达BIM土建计...
        </button>
        <div className="ml-auto flex items-center">
          <button aria-label="显示隐藏的图标" className="mr-[10px]"><Svg s={18}><path d="M1 13l8-9 8 9" stroke="#fff" /></Svg></button>
          <button aria-label="网络" className="mr-[11px]"><Globe size={21} strokeWidth={1.500} /></button>
          <button className="mr-[17px] w-[18px] text-[17px]">中</button>
          <span className="mr-[22px] flex size-[19px] -rotate-6 items-center justify-center rounded-[4px] bg-[#f4521e] text-[17px] font-bold leading-none">S</span>
          <time className="mr-[22px] w-[76px] pb-1 text-center text-[16px] leading-[22px]">17:27<br />2023/3/10</time>
          <button aria-label="通知" className="mr-[24px]"><Svg s={22}><path d="M1.500 2h19v16h-6l-3 3v-3h-10Z" stroke="#fff" /></Svg></button>
          <span className="mr-[5px] h-[51px] w-px bg-[#8894a3]" />
        </div>
      </div>

      {/* desktop overlays */}
      <div className="pointer-events-none absolute bottom-[93px] right-[90px]"><Watermark /></div>
      <div className="pointer-events-none absolute bottom-[24px] right-[90px] opacity-70"><Watermark /></div>

      <div className="absolute bottom-[71px] right-0 flex h-[178px] w-[40px] flex-col items-center rounded-l-2xl bg-[#282c3c]/35 pt-[10px] text-white">
        <svg width="17" height="20" viewBox="0 0 17 20" aria-hidden="true"><path d="M8.500 0.500c2 2 5 2.500 8 2.500v8c0 5-4 7-8 8.500-4-1.500-8-3.500-8-8.500V3c3 0 6-.500 8-2.500Z" fill="#fb8c17" stroke="#4a6fb5" /><path d="M6 7.500 8.500 5H10.500V14H8.500V8L7 9Z" fill="#fff" /></svg>
        <span className="mt-[10px] h-px w-8 bg-white/10" />
        <span className="mt-[7px] h-[37px] w-[13px] rounded-full bg-[linear-gradient(to_bottom,#2c2d30_7px,#ef8e3a_7px,#d8bb1c_18px,#6ecf6a_28px,#27b8c4)]" />
        <span className="mt-[9px] h-px w-8 bg-white/10" />
        <span className="mt-[8px] text-[15px] leading-[18px]">2.5</span>
        <span className="flex items-center gap-1 text-[12px] leading-[12px] text-[#b8b8b8]"><Svg s={8} h={9}><path d="M4 8V1M1 4l3-3 3 3" stroke="#12a5ff" /></Svg>K/s</span>
        <span className="mt-[4px] text-[15px] leading-[18px]">4.5</span>
        <span className="flex items-center gap-1 text-[12px] leading-[12px] text-[#e0e0e0]"><Svg s={8} h={9}><path d="M4 1v7M1 5l3 3 3-3" stroke="#0ac060" /></Svg>K/s</span>
      </div>
    </div>
  );
}
